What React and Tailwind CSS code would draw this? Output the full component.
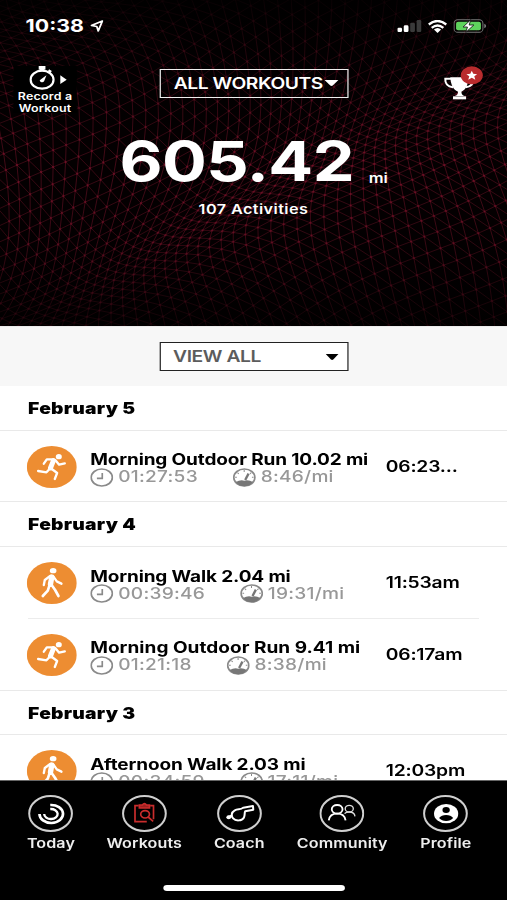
import React from "react";

const COLS = 62;
const ROWS = 38;

// Triangular lattice: odd columns are shifted by half a cell, then everything is bent by slow waves.
function meshPoint(i, j) {
  const u = i * 12 - 110;
  const v = j * 12.5 + (i % 2 ? 6.25 : 0) - 70;
  const x = u + 24 * Math.sin(v / 62 + u / 130 - 1.4) + 5 * Math.sin(v / 34 - u / 90);
  const y = v + 18 * Math.sin(v / 48 + u / 95 + 2.2) + 8 * Math.sin(u / 70);
  return [x, y];
}

function buildMesh() {
  const pt = (i, j) => meshPoint(i, j).map((n) => n.toFixed(1)).join(" ");
  const vertical = [];
  const slanted = [];
  const nodes = [];
  for (let i = 0; i < COLS; i++) {
    let d = "M" + pt(i, 0);
    for (let j = 1; j < ROWS; j++) d += "L" + pt(i, j);
    vertical.push(d);
  }
  for (let i = 0; i < COLS - 1; i++) {
    const step = i % 2 ? 1 : -1;
    for (let j = 1; j < ROWS - 1; j++) {
      slanted.push("M" + pt(i, j) + "L" + pt(i + 1, j));
      slanted.push("M" + pt(i, j) + "L" + pt(i + 1, j + step));
      nodes.push("M" + pt(i, j) + "h0.01");
    }
  }
  return { vertical: vertical.join(""), slanted: slanted.join(""), nodes: nodes.join("") };
}

const mesh = buildMesh();

function Mesh() {
  return (
    <svg className="absolute inset-0 h-full w-full" viewBox="0 0 507 326" preserveAspectRatio="none" fill="none">
      <defs>
        <linearGradient id="fade" x1="0" y1="0" x2="0" y2="1">
          <stop offset="0" stopColor="#000" stopOpacity="0.85" />
          <stop offset="0.25" stopColor="#000" stopOpacity="0.3" />
          <stop offset="0.5" stopColor="#000" stopOpacity="0" />
          <stop offset="0.75" stopColor="#000" stopOpacity="0.15" />
          <stop offset="1" stopColor="#000" stopOpacity="0.7" />
        </linearGradient>
      </defs>
      <rect width="507" height="326" fill="#040001" />
      <g stroke="#8f1731" strokeWidth="1">
        <path d={mesh.vertical} opacity="0.45" />
        <path d={mesh.slanted} opacity="0.38" />
        <path d={mesh.nodes} opacity="0.4" strokeWidth="2.500" strokeLinecap="round" />
      </g>
      <rect width="507" height="326" fill="url(#fade)" />
    </svg>
  );
}

function StatusBar() {
  return (
    <div className="flex h-[52px] items-center justify-between pl-[21px] pr-[17px]">
      <div className="flex items-center gap-[4px]">
        <span className="w-[49px] whitespace-nowrap text-[17.500px] font-bold leading-none">10:38</span>
        <svg className="h-3 w-[11px]" viewBox="0 0 11 12" fill="none" stroke="#fff" strokeWidth="1.500" strokeLinejoin="round">
          <path d="M10 1L1 5.500L5.400 6.400L6.600 11Z" />
        </svg>
      </div>
      <div className="flex items-center gap-[5px]">
        <svg className="h-3 w-[20px]" viewBox="0 0 72 36" preserveAspectRatio="none">
          <rect x="0" y="23" width="14" height="13" rx="4" fill="#fff" />
          <rect x="19" y="16" width="14" height="20" rx="4" fill="#fff" />
          <rect x="38" y="8" width="14" height="28" rx="4" fill="#3a3a3a" />
          <rect x="57" y="0" width="14" height="36" rx="4" fill="#3a3a3a" />
        </svg>
        <svg className="h-[13px] w-4" viewBox="0 0 60 38" preserveAspectRatio="none" fill="none" stroke="#fff" strokeWidth="7">
          <path d="M3 13Q30 -7 57 13" />
          <path d="M12 23Q30 9 48 23" />
          <path d="M19 28Q30 19 41 28L30 38Z" fill="#fff" stroke="none" />
        </svg>
        <svg className="h-[14px] w-[27px]" viewBox="0 0 98 42" preserveAspectRatio="none">
          <rect x="2" y="2" width="86" height="38" rx="11" fill="none" stroke="#777" strokeWidth="3" />
          <rect x="8" y="8" width="74" height="26" rx="6" fill="#5fd35d" />
          <path d="M92 14Q98 17 98 21Q98 25 92 28Z" fill="#777" />
          <path d="M52 2L29 24H42L37 40L61 18H47Z" fill="#fff" stroke="#111" strokeWidth="2.500" />
        </svg>
      </div>
    </div>
  );
}

function Stopwatch() {
  return (
    <svg className="h-[24px] w-[31px] shrink-0" viewBox="0 0 112 72" preserveAspectRatio="none" fill="none">
      <ellipse cx="38" cy="41" rx="34" ry="27" stroke="#fff" strokeWidth="6.500" />
      <path d="M28 0H48V11H44V16H32V11H28Z" fill="#fff" />
      <path d="M57 13L65 18" stroke="#fff" strokeWidth="7" />
      <path d="M51 28L44 46A7 6 0 0 1 31 43Z" fill="#fff" />
      <path d="M92 28L111 41L92 54Z" fill="#fff" />
    </svg>
  );
}

function Trophy() {
  return (
    <svg className="ml-auto h-[35px] w-[33px] shrink-0" viewBox="0 0 120 105" preserveAspectRatio="none" fill="none">
      <path d="M20 34H74C74 56 66 72 53 77C53 84 56 88 63 90H33C40 88 43 84 43 77C29 72 21 56 20 34Z" fill="#fff" />
      <path d="M22 38H5C4 52 12 62 28 64" stroke="#fff" strokeWidth="6" />
      <path d="M73 38H88C90 52 82 62 66 64" stroke="#fff" strokeWidth="6" />
      <rect x="28" y="91" width="39" height="9" fill="#fff" />
      <ellipse cx="84" cy="28" rx="33" ry="27" fill="#b92b2d" />
      <path d="M84 14L88.500 23.500L100 24.500L91.500 31L94.500 41L84 35.500L73.500 41L76.500 31L68 24.500L79.500 23.500Z" fill="#fff" />
    </svg>
  );
}

function Caret({ className }) {
  return (
    <svg className={"shrink-0 " + className} viewBox="0 0 12 6" preserveAspectRatio="none" fill="currentColor">
      <path d="M0.300 0H11.700L7 5.500Q6 6.300 5 5.500Z" />
    </svg>
  );
}

function Hero() {
  return (
    <header className="relative h-[326px] bg-black text-white">
      <Mesh />
      <div className="relative">
        <StatusBar />
        <div className="flex h-[62px] items-start pl-[11px] pr-[19px] pt-[14px]">
          <button className="flex h-[47px] w-[52px] shrink-0 flex-col items-center bg-black">
            <div className="flex pl-[5px]">
              <Stopwatch />
            </div>
            <span className="mt-px whitespace-nowrap text-center text-[10.200px] font-semibold leading-[11.500px] tracking-[0.200px]">
              Record a<br />Workout
            </span>
          </button>
          <button className="ml-[68px] mt-[2.500px] flex h-[29px] w-[155px] shrink-0 items-center justify-between border-[1.500px] border-[#eee] pl-[10.500px] pr-[7px]">
            <span className="mt-px whitespace-nowrap text-[15.800px] font-semibold leading-none tracking-[-0.350px]">ALL WORKOUTS</span>
            <Caret className="h-[6px] w-[12px]" />
          </button>
          <Trophy />
        </div>
        <div className="flex h-[76px] items-end pl-[98px]">
          <span className="w-[204.500px] whitespace-nowrap text-[54.500px] font-bold leading-[58px] tracking-[-0.450px]">605.42</span>
          <span className="pb-[3.500px] text-[13.500px] font-semibold leading-[18px]">mi</span>
        </div>
        <div className="pt-[10px] text-center text-[13.300px] font-semibold leading-[18px] tracking-[0.350px]">107 Activities</div>
      </div>
    </header>
  );
}

function Filter() {
  return (
    <div className="flex h-[60px] items-start justify-center border-t border-[#ececec] bg-[#f7f7f7] pt-[15px]">
      <button className="flex h-[29px] w-[155px] items-center justify-between border-[1.500px] border-[#222] bg-white pl-[10.500px] pr-[7px]">
        <span className="mt-px whitespace-nowrap text-[15.800px] font-semibold leading-none tracking-[-0.350px] text-[#5c5c5c]">VIEW ALL</span>
        <Caret className="h-[6px] w-[11px] text-black" />
      </button>
    </div>
  );
}

function ActivityIcon({ kind }) {
  return (
    <svg className="h-[42px] w-[41px] shrink-0" viewBox="0 0 150 126" preserveAspectRatio="none" fill="none">
      <ellipse cx="75" cy="63" rx="75" ry="63" fill="#ed8d32" />
      {kind === "run" ? (
        <g stroke="#fff" strokeWidth="7" strokeLinecap="round" strokeLinejoin="round">
          <ellipse cx="96" cy="32" rx="9" ry="8" fill="#fff" stroke="none" />
          <path d="M80 44L71 66" strokeWidth="15" />
          <path d="M80 40L60 40L51 53" />
          <path d="M86 43L97 56L114 52" />
          <path d="M69 68L59 79L34 75" />
          <path d="M75 69L91 81L84 99" />
        </g>
      ) : (
        <g stroke="#fff" strokeWidth="7" strokeLinecap="round" strokeLinejoin="round">
          <ellipse cx="79" cy="26" rx="10" ry="8" fill="#fff" stroke="none" />
          <path d="M75 45L71 67" strokeWidth="16" />
          <path d="M70 42L54 54L51 69" />
          <path d="M80 44L90 58L104 65" />
          <path d="M68 70L63 86L48 102" strokeWidth="8" />
          <path d="M75 70L85 84L95 102" strokeWidth="8" />
        </g>
      )}
    </svg>
  );
}

function Clock() {
  return (
    <svg className="h-[19px] w-[19px]" viewBox="0 0 69 57" preserveAspectRatio="none" fill="none" stroke="#8a8a8a" strokeWidth="5">
      <ellipse cx="34.500" cy="28.500" rx="31.500" ry="25.500" />
      <path d="M36 15V31H20" />
    </svg>
  );
}

function Gauge() {
  return (
    <svg className="h-[19px] w-[19px]" viewBox="0 0 69 57" preserveAspectRatio="none" fill="none" stroke="#8a8a8a" strokeWidth="5">
      <ellipse cx="34.500" cy="28.500" rx="31.500" ry="25.500" />
      <path d="M9 42Q22 35 34 38Q48 35 60 42Q50 55 34.500 55Q18 55 9 42Z" fill="#777" stroke="none" />
      <path d="M47 17L37 36" strokeWidth="7" stroke="#777" />
      <path d="M34 6V12M14 14L18 18M55 14L51 18M7 28H12M57 28H62" strokeWidth="3" />
    </svg>
  );
}

function Row({ kind, title, time, pace, at, tracking = "tracking-[-0.120px]" }) {
  return (
    <div className="flex h-[70.900px] pl-[22px]">
      <div className="pt-[15px]">
        <ActivityIcon kind={kind} />
      </div>
      <div className="w-[243px] pl-[11px] pt-[19.500px]">
        <div className={"whitespace-nowrap text-[15.600px] font-bold leading-[20px] " + tracking}>{title}</div>
        <div className="-mt-[3px] flex items-center whitespace-nowrap text-[15.700px] font-medium leading-[20px] tracking-[0.200px] text-[#989898]">
          <Clock />
          <span className="ml-[4px] mr-[28.500px]">{time}</span>
          <Gauge />
          <span className="ml-[4px]">{pace}</span>
        </div>
      </div>
      <div className="ml-[10.500px] pt-[26px] text-[15.800px] font-semibold leading-[20px] tracking-[-0.150px]">{at}</div>
    </div>
  );
}

function DayHeading({ children }) {
  return <h2 className="h-[43.600px] whitespace-nowrap pl-[23px] text-[15.800px] font-black leading-[45.500px] tracking-[0.200px]">{children}</h2>;
}

function Line({ inset }) {
  return <div className={inset ? "mx-[23px] h-px bg-[#ececec]" : "h-px bg-[#e9e9e9]"} />;
}

function Ring({ children }) {
  return (
    <svg className="h-[37px] w-[37px]" viewBox="0 0 134 111" preserveAspectRatio="none" fill="none">
      <ellipse cx="67" cy="55.500" rx="63.500" ry="52.500" stroke="#cfcfcf" strokeWidth="6" />
      {children}
    </svg>
  );
}

function Tab({ width, label, children }) {
  return (
    <button className={"flex flex-col items-center " + width}>
      <Ring>{children}</Ring>
      <span className="mt-[2px] whitespace-nowrap text-[13.200px] font-semibold leading-[18px] tracking-[0.080px] text-[#eee]">{label}</span>
    </button>
  );
}

function TabBar() {
  return (
    <nav className="h-[120px] border-t border-[#666] bg-black pt-[14px]">
      <div className="flex gap-[27px] pl-[22.800px]">
        <Tab width="w-[38px]" label="Today">
          <path d="M66 30A35 27 0 1 1 34 57" stroke="#fff" strokeWidth="8" />
          <path d="M66 42A20 15 0 1 1 48 57" stroke="#fff" strokeWidth="7" />
        </Tab>
        <Tab width="w-[61px]" label="Workouts">
          <g stroke="#c92c2c" strokeWidth="5">
            <path d="M50 32H39V80H74M84 32H94V73" />
            <path d="M52 39V30H61Q67 22 73 30H82V39Z" fill="#9c2020" />
            <ellipse cx="69" cy="58" rx="13" ry="11" />
            <path d="M78 66L93 79" />
          </g>
        </Tab>
        <Tab width="w-[41px]" label="Coach">
          <g stroke="#fff" strokeWidth="6" strokeLinejoin="round" strokeLinecap="round">
            <path d="M84 49L108 44L107 33L78 38C70 46 62 40 53 46C42 52 42 64 48 70C56 79 74 78 80 68C84 61 81 54 84 49Z" />
            <path d="M43 62L34 66" />
            <ellipse cx="35" cy="67" rx="7" ry="6" fill="#fff" stroke="none" />
          </g>
        </Tab>
        <Tab width="w-[74px]" label="Community">
          <g stroke="#fff" strokeWidth="5.500">
            <ellipse cx="53" cy="43" rx="16" ry="13" />
            <path d="M28 76C30 63 39 56 53 56C67 56 76 63 78 76" />
            <g strokeWidth="4" stroke="#ddd">
              <ellipse cx="89" cy="41" rx="12" ry="10" />
              <path d="M75 56C79 51 84 51 89 51C99 51 105 56 106 64" />
            </g>
          </g>
        </Tab>
        <Tab width="w-[42px]" label="Profile">
          <ellipse cx="69" cy="56" rx="36" ry="29" fill="#fff" />
          <ellipse cx="69" cy="45" rx="11" ry="9" fill="#000" />
          <path d="M48 69Q55 60 69 60Q83 60 90 69Q82 78 69 78Q56 78 48 69Z" fill="#000" />
        </Tab>
      </div>
      <div className="ml-[134px] mt-[33px] h-[6px] w-[149px] rounded-full bg-white" />
    </nav>
  );
}

export default function App() {
  return (
    <div className="h-[900px] w-[507px] overflow-hidden bg-white">
      <div className="flex h-[900px] w-[416px] origin-top-left scale-x-[1.21875] flex-col font-['Inter','Liberation_Sans',sans-serif] text-black">
        <Hero />
        <Filter />
        <main className="h-[394px] overflow-hidden">
          <DayHeading>February 5</DayHeading>
          <Line />
          <Row kind="run" title="Morning Outdoor Run 10.02 mi" time="01:27:53" pace="8:46/mi" at="06:23..." />
          <Line />
          <DayHeading>February 4</DayHeading>
          <Line />
          <Row kind="walk" title="Morning Walk 2.04 mi" time="00:39:46" pace="19:31/mi" at="11:53am" />
          <Line inset />
          <Row
            kind="run"
            title="Morning Outdoor Run 9.41 mi"
            time="01:21:18"
            pace="8:38/mi"
            at="06:17am"
            tracking="tracking-[0.020px]"
          />
          <Line />
          <DayHeading>February 3</DayHeading>
          <Line />
          <Row kind="walk" title="Afternoon Walk 2.03 mi" time="00:34:59" pace="17:11/mi" at="12:03pm" />
        </main>
        <TabBar />
      </div>
    </div>
  );
}
